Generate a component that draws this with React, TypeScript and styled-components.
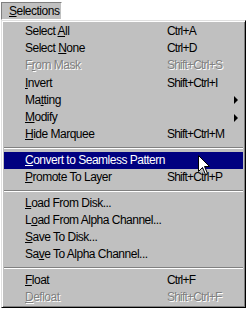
import React from "react";
import styled, { createGlobalStyle } from "styled-components";

type Item =
  | { kind: "sep" }
  | {
      kind: "item";
      label: string;
      mnemonic: number;
      shortcut?: string;
      disabled?: boolean;
      submenu?: boolean;
      active?: boolean;
    };

const items: Item[] = [
  { kind: "item", label: "Select All", mnemonic: 7, shortcut: "Ctrl+A" },
  { kind: "item", label: "Select None", mnemonic: 7, shortcut: "Ctrl+D" },
  { kind: "item", label: "From Mask", mnemonic: 1, shortcut: "Shift+Ctrl+S", disabled: true },
  { kind: "item", label: "Invert", mnemonic: 0, shortcut: "Shift+Ctrl+I" },
  { kind: "item", label: "Matting", mnemonic: 2, submenu: true },
  { kind: "item", label: "Modify", mnemonic: 0, submenu: true },
  { kind: "item", label: "Hide Marquee", mnemonic: 0, shortcut: "Shift+Ctrl+M" },
  { kind: "sep" },
  { kind: "item", label: "Convert to Seamless Pattern", mnemonic: 0, active: true },
  { kind: "item", label: "Promote To Layer", mnemonic: 0, shortcut: "Shift+Ctrl+P" },
  { kind: "sep" },
  { kind: "item", label: "Load From Disk...", mnemonic: 0 },
  { kind: "item", label: "Load From Alpha Channel...", mnemonic: 1 },
  { kind: "item", label: "Save To Disk...", mnemonic: 0 },
  { kind: "item", label: "Save To Alpha Channel...", mnemonic: 2 },
  { kind: "sep" },
  { kind: "item", label: "Float", mnemonic: 0, shortcut: "Ctrl+F" },
  { kind: "item", label: "Defloat", mnemonic: 0, shortcut: "Shift+Ctrl+F", disabled: true },
];

const Mnemonic = ({ text, index }: { text: string; index: number }) => (
  <>
    {text.slice(0, index)}
    <u>{text[index]}</u>
    {text.slice(index + 1)}
  </>
);

export default function App() {
  return (
    <>
      <GlobalStyle />
      <Screen>
        <MenuBar>
          <MenuTitle>
            <Mnemonic text="Selections" index={0} />
          </MenuTitle>
        </MenuBar>
        <Menu>
          {items.map((it, i) =>
            it.kind === "sep" ? (
              <Separator key={i} />
            ) : (
              <Row key={i} $active={it.active} $disabled={it.disabled}>
                <Label>
                  <Mnemonic text={it.label} index={it.mnemonic} />
                </Label>
                <Shortcut>{it.shortcut}</Shortcut>
                {it.submenu ? <Arrow /> : <span />}
              </Row>
            )
          )}
        </Menu>
        <Cursor width="12" height="20" viewBox="0 0 12 20">
          <path
            d="M0.5 0.5 L0.5 16.5 L4.5 12.5 L7.5 19.5 L9.5 18.5 L6.5 11.5 L11.5 11.5 Z"
            fill="#fff"
            stroke="#000"
            strokeWidth="1"
          />
        </Cursor>
      </Screen>
    </>
  );
}

const GlobalStyle = createGlobalStyle`
  body {
    margin: 0;
    background: #fff;
    font-family: "Liberation Sans", Arial, sans-serif;
    font-size: 12px;
    letter-spacing: -0.5px;
  }
`;

const Screen = styled.div`
  position: relative;
  width: 246px;
  height: 309px;
  overflow: hidden;
`;

const MenuBar = styled.div`
  display: flex;
  height: 20px;
  padding: 2px 0 0 1px;
  box-sizing: border-box;
`;

const MenuTitle = styled.div`
  width: 61px;
  height: 18px;
  box-sizing: border-box;
  background: #c0c0c0;
  border: 1px solid;
  border-color: #808080 #fff #fff #808080;
  padding-left: 7px;
  line-height: 17px;
  color: #000;
`;

const Menu = styled.div`
  margin-left: 1px;
  width: 245px;
  box-sizing: border-box;
  background: #c0c0c0;
  border: 1px solid;
  border-color: #dfdfdf #000 #000 #dfdfdf;
  box-shadow: inset 1px 1px #fff, inset -1px -1px #808080;
  padding: 2px 2px 0 2px;
`;

const Row = styled.div<{ $active?: boolean; $disabled?: boolean }>`
  display: grid;
  grid-template-columns: 142px 1fr 4px;
  align-items: center;
  height: 17.2px;
  padding: 0 5px 0 21px;
  background: ${(p) => (p.$active ? "#000080" : "transparent")};
  color: ${(p) => (p.$active ? "#fff" : p.$disabled ? "#808080" : "#000")};
  text-shadow: ${(p) => (p.$disabled ? "1px 1px #fff" : "none")};
  white-space: nowrap;
  line-height: 17.2px;
`;

const Label = styled.span``;

const Shortcut = styled.span`
  letter-spacing: -0.8px;
`;

const Arrow = styled.span`
  width: 0;
  height: 0;
  border-top: 4px solid transparent;
  border-bottom: 4px solid transparent;
  border-left: 4px solid #000;
`;

const Separator = styled.div`
  height: 8.6px;
  display: flex;
  align-items: center;

  &::before {
    content: "";
    flex: 1;
    height: 0;
    border-top: 1px solid #808080;
    border-bottom: 1px solid #fff;
  }
`;

const Cursor = styled.svg`
  position: absolute;
  left: 198px;
  top: 155px;
`;
